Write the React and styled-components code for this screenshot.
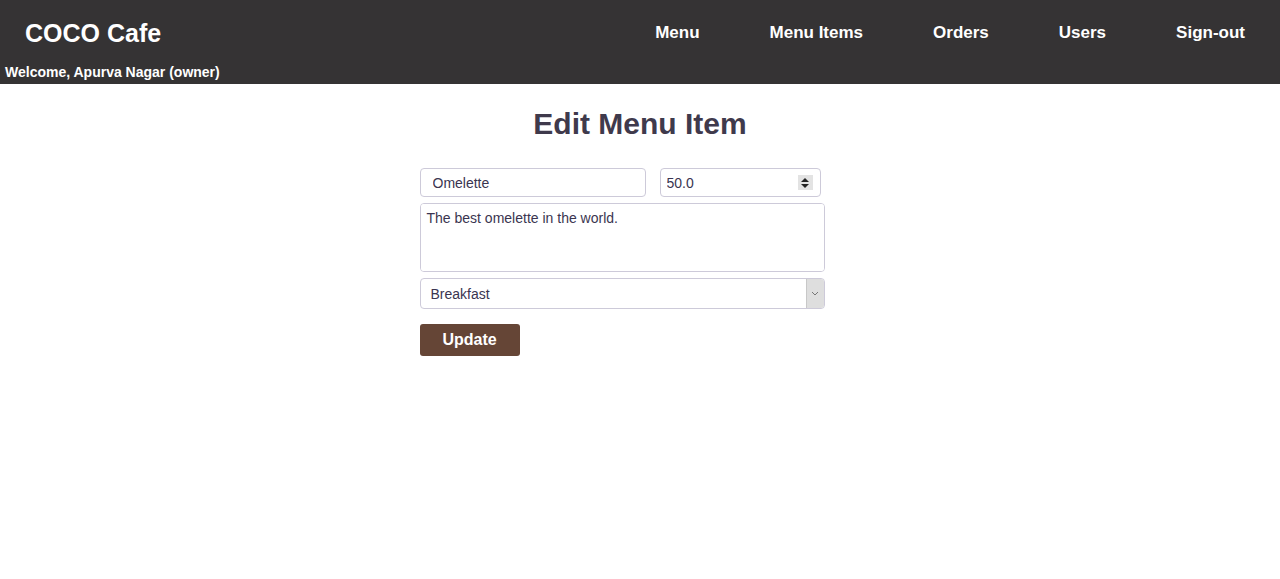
import React from 'react'
import styled, { createGlobalStyle } from 'styled-components'

const GlobalStyle = createGlobalStyle`
  body {
    margin: 0;
    background: #fff;
    font-family: "Liberation Sans", Arial, sans-serif;
  }
`

const Header = styled.header`
  background-color: #353334;
  height: 84px;
  color: #fff;
  display: flex;
  flex-direction: column;
`

const TopRow = styled.div`
  display: flex;
  align-items: center;
  justify-content: space-between;
  height: 66px;
  padding-left: 25px;
`

const Brand = styled.div`
  font-size: 25px;
  font-weight: bold;
`

const Nav = styled.nav`
  display: flex;
  align-items: center;
`

const NavLink = styled.a`
  font-size: 17px;
  font-weight: bold;
  color: #fff;
  text-decoration: none;
  padding: 0 35px;
`

const Welcome = styled.div`
  font-size: 14px;
  font-weight: bold;
  padding-left: 5px;
  line-height: 12px;
`

const Main = styled.main`
  display: flex;
  flex-direction: column;
  align-items: center;
`

const Title = styled.h1`
  font-size: 30px;
  font-weight: bold;
  color: #3f3a4c;
  margin: 22px 0 26px;
  line-height: 36px;
`

const Form = styled.form`
  width: 441px;
  display: flex;
  flex-direction: column;
`

const Row = styled.div`
  display: flex;
  gap: 14px;
  margin-bottom: 6px;
`

const Field = styled.div`
  box-sizing: border-box;
  width: ${props => props.width}px;
  height: ${props => props.height || 29}px;
  border: 1px solid #cdcad9;
  border-radius: 4px;
  background: #fff;
  display: flex;
  align-items: stretch;
  overflow: hidden;
  margin-bottom: ${props => props.gap || 0}px;
`

const Input = styled.input`
  flex: 1;
  min-width: 0;
  border: none;
  outline: none;
  background: transparent;
  font-family: inherit;
  font-size: 14px;
  color: #3a3550;
  padding: 0 0 0 ${props => props.pad || 6}px;
`

const TextArea = styled.textarea`
  flex: 1;
  height: 100%;
  border: none;
  outline: none;
  resize: none;
  font-family: inherit;
  font-size: 14px;
  color: #3a3550;
  padding: 6px 6px;
  line-height: 16px;
`

const Spinner = styled.div`
  width: 15px;
  height: 15px;
  margin: auto 7px auto 0;
  background: #e3e3e3;
  display: flex;
  flex-direction: column;
  align-items: center;
  justify-content: center;
  gap: 2px;
`

const Tri = styled.span`
  width: 0;
  height: 0;
  border-left: 4px solid transparent;
  border-right: 4px solid transparent;
  ${props => (props.down ? 'border-top: 4px solid #222;' : 'border-bottom: 4px solid #222;')}
`

const SelectText = styled.div`
  flex: 1;
  display: flex;
  align-items: center;
  padding-left: 10px;
  font-size: 14px;
  color: #3a3550;
`

const ArrowBox = styled.div`
  width: 17px;
  background: #dedede;
  border-left: 1px solid #c8c8c8;
  display: flex;
  align-items: center;
  justify-content: center;
`

const Button = styled.button`
  margin-top: 15px;
  width: 100px;
  height: 32px;
  border: none;
  border-radius: 3px;
  background-color: #654536;
  color: #fff;
  font-family: inherit;
  font-size: 16px;
  font-weight: bold;
`

const App = () => {
  return (
    <>
      <GlobalStyle />
      <Header>
        <TopRow>
          <Brand>COCO Cafe</Brand>
          <Nav>
            <NavLink href="#">Menu</NavLink>
            <NavLink href="#">Menu Items</NavLink>
            <NavLink href="#">Orders</NavLink>
            <NavLink href="#">Users</NavLink>
            <NavLink href="#">Sign-out</NavLink>
          </Nav>
        </TopRow>
        <Welcome>Welcome, Apurva Nagar (owner)</Welcome>
      </Header>
      <Main>
        <Title>Edit Menu Item</Title>
        <Form onSubmit={e => e.preventDefault()}>
          <Row>
            <Field width={226}>
              <Input pad={12} defaultValue="Omelette" />
            </Field>
            <Field width={161}>
              <Input defaultValue="50.0" />
              <Spinner>
                <Tri />
                <Tri down />
              </Spinner>
            </Field>
          </Row>
          <Field width={405} height={69} gap={6}>
            <TextArea defaultValue="The best omelette in the world." />
          </Field>
          <Field width={405} height={31}>
            <SelectText>Breakfast</SelectText>
            <ArrowBox>
              <svg width="8" height="5" viewBox="0 0 8 5">
                <path d="M1 1 L4 4 L7 1" fill="none" stroke="#777" strokeWidth="1" />
              </svg>
            </ArrowBox>
          </Field>
          <Button type="submit">Update</Button>
        </Form>
      </Main>
    </>
  )
}

export default App
